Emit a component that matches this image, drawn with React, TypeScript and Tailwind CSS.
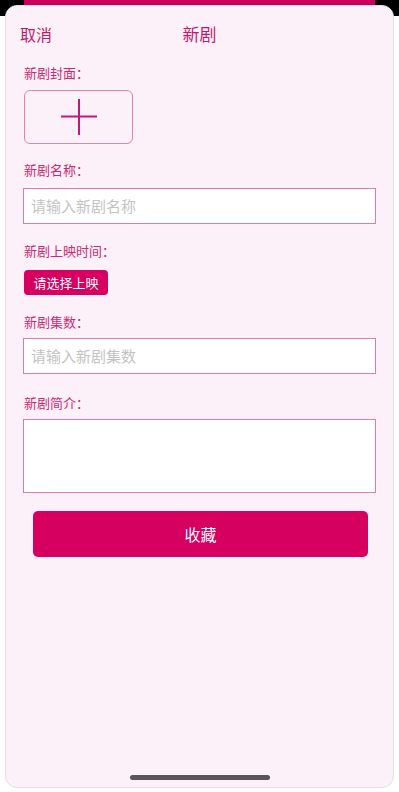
import React from "react";

const font = { fontFamily: '"Noto Sans CJK SC", "Noto Sans", sans-serif' };

function Label({ children, className = "" }: { children: React.ReactNode; className?: string }) {
  return (
    <div className={`text-[13px] leading-[20px] text-[#c92a70] ${className}`}>{children}</div>
  );
}

export default function App() {
  return (
    <div className="w-[399px] h-[792px] bg-white overflow-hidden" style={font}>
      <div className="h-[16px] bg-black flex">
        <div className="mx-[24px] flex-1 bg-[#c8005a]" />
      </div>
      <div className="relative -mt-[11px] ml-[5px] mr-[5px] h-[783px] rounded-[12px] border border-[#e3dfe2] bg-[#fcf1f8] flex flex-col">
        <div className="relative h-[36px] mt-[10px] flex items-center">
          <span className="ml-[14px] text-[16px] text-[#c2186a]">取消</span>
          <span className="absolute left-0 right-0 text-center text-[17px] text-[#c2186a] pointer-events-none">新剧</span>
        </div>
        <div className="px-[17px] flex flex-col">
          <Label className="mt-[11px] ml-[1px]">新剧封面：</Label>
          <div className="mt-[7px] ml-[1px] w-[109px] h-[54px] rounded-[6px] border border-[#e680ac] flex items-center justify-center">
            <svg width="36" height="36" viewBox="0 0 36 36">
              <path d="M0 17.5H36M18 0V36" stroke="#c8157a" strokeWidth="2" />
            </svg>
          </div>
          <Label className="mt-[16px] ml-[1px]">新剧名称：</Label>
          <div className="mt-[8px] h-[36px] bg-white border border-[#e37aa8] flex items-center px-[7px]">
            <span className="text-[15px] text-[#c3c3c3]">请输入新剧名称</span>
          </div>
          <Label className="mt-[17px] ml-[1px]">新剧上映时间：</Label>
          <div className="mt-[9px] ml-[1px] w-[84px] h-[25px] rounded-[4px] bg-[#d5005f] flex items-center justify-center">
            <span className="text-[13px] text-white">请选择上映</span>
          </div>
          <Label className="mt-[17px] ml-[1px]">新剧集数：</Label>
          <div className="mt-[6px] h-[36px] bg-white border border-[#e37aa8] flex items-center px-[7px]">
            <span className="text-[15px] text-[#c3c3c3]">请输入新剧集数</span>
          </div>
          <Label className="mt-[19px] ml-[1px]">新剧简介：</Label>
          <div className="mt-[6px] h-[74px] bg-white border border-[#e37aa8]" />
          <div className="mt-[18px] ml-[10px] mr-[8px] h-[46px] rounded-[5px] bg-[#d5005f] flex items-center justify-center">
            <span className="text-[16px] text-white">收藏</span>
          </div>
        </div>
        <div className="mt-auto mb-[7px] mx-auto w-[140px] h-[5px] rounded-full bg-[#5a5558]" />
      </div>
    </div>
  );
}
